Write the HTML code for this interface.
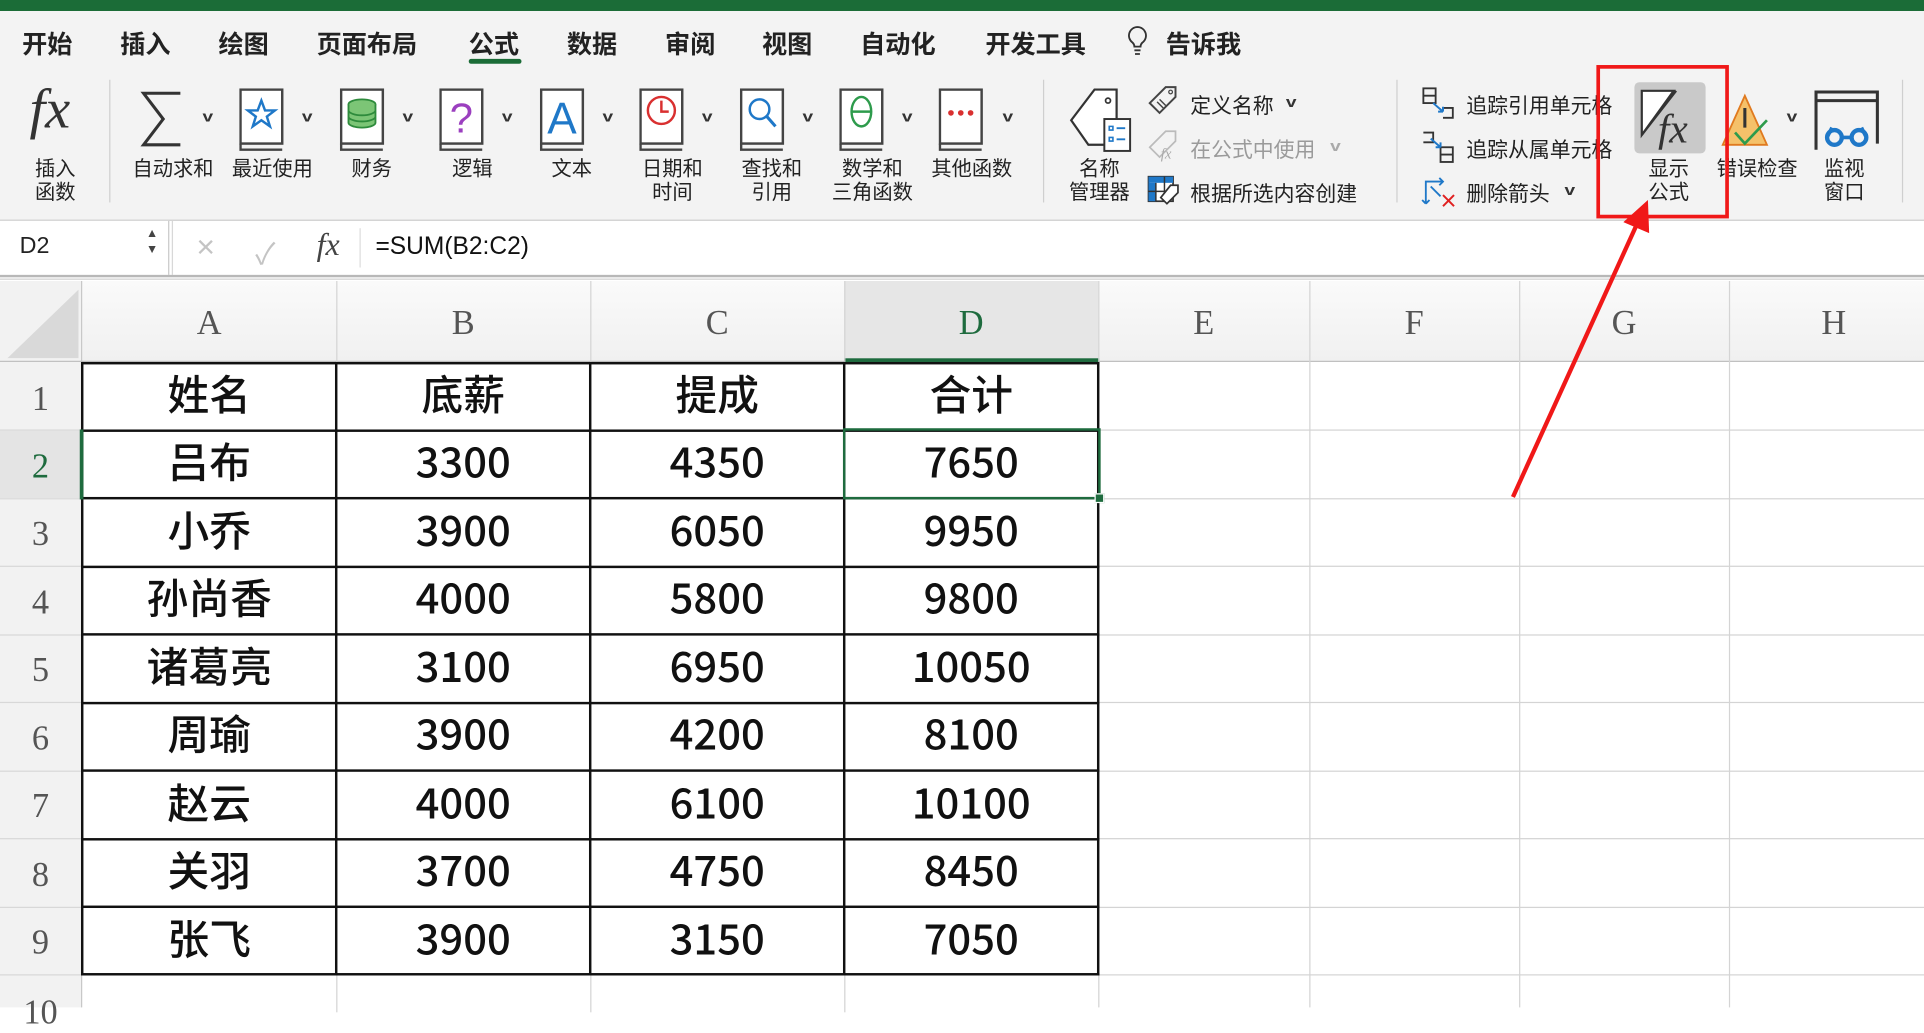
<!DOCTYPE html>
<html><head><meta charset="utf-8">
<style>
html,body{margin:0;padding:0;width:1924px;height:1008px;overflow:hidden;background:#fff}
#w{position:absolute;left:0;top:0;width:1568px;height:821.5px;transform:scale(1.22704);transform-origin:0 0;font-family:"Liberation Sans","Noto Sans CJK SC",sans-serif;color:#222}
.a{position:absolute}
.tab{position:absolute;top:19px;font-size:20.5px;font-weight:bold;color:#222;white-space:nowrap}
.lbl{position:absolute;font-size:16.5px;color:#222;text-align:center;line-height:19px;white-space:nowrap;transform:translateX(-50%)}
.sm{position:absolute;font-size:17px;color:#222;white-space:nowrap}
.chev{position:absolute;font-size:12px;font-weight:bold;color:#333;transform:scaleX(1.3)}
.sep{position:absolute;width:1px;background:#cfcfcf}
.ch{position:absolute;top:230px;height:65px;line-height:68px;text-align:center;font-family:"Liberation Serif",serif;font-size:28px;color:#555;transform-origin:center}
.rh{position:absolute;left:0;width:66px;text-align:center;font-family:"Liberation Serif",serif;font-size:28px;color:#555}
.c{position:absolute;text-align:center;font-size:34px;color:#111;line-height:50px;height:55px;font-family:"Noto Sans CJK SC","Liberation Sans",sans-serif;font-weight:500}
.hl{position:absolute;height:1px;background:#d4d4d4}
.vl{position:absolute;width:1px;background:#d4d4d4}
.bh{position:absolute;height:2px;background:#111;left:67px;width:829px}
.bv{position:absolute;width:2px;background:#111;top:295px;height:500px}
</style></head><body><div id="w">
<div class="a" style="left:0;top:0;width:1568px;height:9px;background:#1b6c37"></div>
<div class="a" style="left:0;top:9px;width:1568px;height:170px;background:#f3f3f3;border-bottom:1px solid #c9c9c9"></div>
<div class="tab" style="left:18px">开始</div>
<div class="tab" style="left:98px">插入</div>
<div class="tab" style="left:178px">绘图</div>
<div class="tab" style="left:258px">页面布局</div>
<div class="tab" style="left:382px">公式</div>
<div class="a" style="left:382px;top:48px;width:43px;height:4px;border-radius:2px;background:#1b6c37"></div>
<div class="tab" style="left:462px">数据</div>
<div class="tab" style="left:542px">审阅</div>
<div class="tab" style="left:621px">视图</div>
<div class="tab" style="left:701px">自动化</div>
<div class="tab" style="left:803px">开发工具</div>
<svg class="a" style="left:917px;top:20px" width="20" height="28" viewBox="0 0 20 28"><path d="M10 2a7 7 0 0 0-4 12.7c1 1 1.5 2 1.5 3.3h5c0-1.3.5-2.3 1.5-3.3A7 7 0 0 0 10 2z" fill="none" stroke="#333" stroke-width="1.5"/><path d="M7.5 21h5M8 24h4" stroke="#333" stroke-width="1.5"/></svg>
<div class="tab" style="left:950px">告诉我</div>

<div class="a" style="left:24px;top:62px;font-family:'Liberation Serif',serif;font-style:italic;font-size:46px;color:#333">fx</div>
<div class="lbl" style="left:45px;top:129px">插入<br>函数</div>
<div class="sep" style="left:89px;top:65px;height:100px"></div>

<svg class="a" style="left:113px;top:72px" width="40" height="50" viewBox="0 0 40 50"><path d="M34 4H4l16 21L4 46h30" fill="none" stroke="#333" stroke-width="2.5"/></svg>
<div class="chev" style="left:166px;top:88px">v</div>
<div class="lbl" style="left:141px;top:129px">自动求和</div>

<svg class="a" style="left:195px;top:72px" width="38" height="52" viewBox="0 0 38 52"><rect x="1" y="1" width="34" height="44" fill="#fff" stroke="#444" stroke-width="2"/><path d="M1 45v5h34" fill="none" stroke="#444" stroke-width="2"/><path d="M18 10l3 8h8l-6.5 5 2.5 8-7-5-7 5 2.5-8L7 18h8z" fill="none" stroke="#1f78c8" stroke-width="2"/></svg>
<div class="chev" style="left:247px;top:88px">v</div>
<div class="lbl" style="left:222px;top:129px">最近使用</div>

<svg class="a" style="left:277px;top:72px" width="38" height="52" viewBox="0 0 38 52"><rect x="1" y="1" width="34" height="44" fill="#fff" stroke="#444" stroke-width="2"/><path d="M1 45v5h34" fill="none" stroke="#444" stroke-width="2"/><ellipse cx="18" cy="13" rx="11" ry="4" fill="#7cc576" stroke="#2e8b3c" stroke-width="1.5"/><path d="M7 13v15c0 2 5 4 11 4s11-2 11-4V13M7 18c0 2 5 4 11 4s11-2 11-4M7 23c0 2 5 4 11 4s11-2 11-4" fill="#7cc576" stroke="#2e8b3c" stroke-width="1.5"/></svg>
<div class="chev" style="left:329px;top:88px">v</div>
<div class="lbl" style="left:303px;top:129px">财务</div>

<svg class="a" style="left:358px;top:72px" width="38" height="52" viewBox="0 0 38 52"><rect x="1" y="1" width="34" height="44" fill="#fff" stroke="#444" stroke-width="2"/><path d="M1 45v5h34" fill="none" stroke="#444" stroke-width="2"/><text x="18" y="36" font-family="Liberation Sans" font-size="34" fill="#9b3fbf" text-anchor="middle">?</text></svg>
<div class="chev" style="left:410px;top:88px">v</div>
<div class="lbl" style="left:385px;top:129px">逻辑</div>

<svg class="a" style="left:440px;top:72px" width="38" height="52" viewBox="0 0 38 52"><rect x="1" y="1" width="34" height="44" fill="#fff" stroke="#444" stroke-width="2"/><path d="M1 45v5h34" fill="none" stroke="#444" stroke-width="2"/><text x="18" y="37" font-family="Liberation Sans" font-size="36" fill="#1f78c8" text-anchor="middle">A</text></svg>
<div class="chev" style="left:492px;top:88px">v</div>
<div class="lbl" style="left:466px;top:129px">文本</div>

<svg class="a" style="left:521px;top:72px" width="38" height="52" viewBox="0 0 38 52"><rect x="1" y="1" width="34" height="44" fill="#fff" stroke="#444" stroke-width="2"/><path d="M1 45v5h34" fill="none" stroke="#444" stroke-width="2"/><circle cx="18" cy="18" r="11" fill="none" stroke="#d93030" stroke-width="2"/><path d="M18 10v9h6" fill="none" stroke="#d93030" stroke-width="2"/></svg>
<div class="chev" style="left:573px;top:88px">v</div>
<div class="lbl" style="left:548px;top:129px">日期和<br>时间</div>

<svg class="a" style="left:603px;top:72px" width="38" height="52" viewBox="0 0 38 52"><rect x="1" y="1" width="34" height="44" fill="#fff" stroke="#444" stroke-width="2"/><path d="M1 45v5h34" fill="none" stroke="#444" stroke-width="2"/><circle cx="16" cy="17" r="8" fill="none" stroke="#1f78c8" stroke-width="2"/><path d="M22 23l7 8" stroke="#1f78c8" stroke-width="2.5"/></svg>
<div class="chev" style="left:655px;top:88px">v</div>
<div class="lbl" style="left:629px;top:129px">查找和<br>引用</div>

<svg class="a" style="left:684px;top:72px" width="38" height="52" viewBox="0 0 38 52"><rect x="1" y="1" width="34" height="44" fill="#fff" stroke="#444" stroke-width="2"/><path d="M1 45v5h34" fill="none" stroke="#444" stroke-width="2"/><ellipse cx="18" cy="19" rx="8" ry="12" fill="none" stroke="#2e9b4c" stroke-width="2"/><path d="M10 19h16" stroke="#2e9b4c" stroke-width="2"/></svg>
<div class="chev" style="left:736px;top:88px">v</div>
<div class="lbl" style="left:711px;top:129px">数学和<br>三角函数</div>

<svg class="a" style="left:765px;top:72px" width="38" height="52" viewBox="0 0 38 52"><rect x="1" y="1" width="34" height="44" fill="#fff" stroke="#444" stroke-width="2"/><path d="M1 45v5h34" fill="none" stroke="#444" stroke-width="2"/><circle cx="10" cy="20" r="2.3" fill="#d93030"/><circle cx="18" cy="20" r="2.3" fill="#d93030"/><circle cx="26" cy="20" r="2.3" fill="#d93030"/></svg>
<div class="chev" style="left:818px;top:88px">v</div>
<div class="lbl" style="left:792px;top:129px">其他函数</div>

<div class="sep" style="left:850px;top:65px;height:100px"></div>

<svg class="a" style="left:870px;top:70px" width="56" height="56" viewBox="0 0 56 56"><path d="M40 3H22L3 28l14 20h23z" fill="#fff" stroke="#333" stroke-width="1.8"/><circle cx="33" cy="12" r="2" fill="none" stroke="#333" stroke-width="1.4"/><rect x="30" y="27" width="21" height="26" fill="#fff" stroke="#333" stroke-width="1.6"/><path d="M34 33h3v3h-3zM34 42h3v3h-3z" fill="none" stroke="#1f78c8" stroke-width="1.3"/><path d="M40 34.5h7M40 43.5h7" stroke="#1f78c8" stroke-width="1.5"/></svg>
<div class="lbl" style="left:896px;top:129px">名称<br>管理器</div>

<svg class="a" style="left:934px;top:68px" width="28" height="28" viewBox="0 0 28 28"><path d="M16 3h8v8L11 24 3 16z" fill="none" stroke="#444" stroke-width="1.6"/><circle cx="20" cy="7" r="1.5" fill="none" stroke="#444"/><path d="M9 15l5 5M11 13l5 5" stroke="#444" stroke-width="1.2"/></svg>
<div class="sm" style="left:970px;top:72px">定义名称</div><div class="chev" style="left:1049px;top:76px">v</div>
<svg class="a" style="left:934px;top:104px" width="28" height="28" viewBox="0 0 28 28"><path d="M16 3h8v8L11 24 3 16z" fill="none" stroke="#bbb" stroke-width="1.4"/><text x="12" y="25" font-family="Liberation Serif" font-style="italic" font-size="12" fill="#aaa">fx</text></svg>
<div class="sm" style="left:970px;top:108px;color:#9a9a9a">在公式中使用</div><div class="chev" style="left:1085px;top:112px;color:#aaa">v</div>
<svg class="a" style="left:934px;top:141px" width="30" height="28" viewBox="0 0 30 28"><rect x="2" y="3" width="20" height="20" fill="#fff" stroke="#333" stroke-width="1.4"/><rect x="2" y="3" width="20" height="5" fill="#1f78c8"/><rect x="2" y="8" width="6" height="15" fill="#1f78c8"/><path d="M8 8v15M15 3v20M2 15h20" stroke="#333" stroke-width="1.2"/><path d="M20 10h6v6l-9 9-5-5z" fill="#fff" stroke="#333" stroke-width="1.4"/></svg>
<div class="sm" style="left:970px;top:144px">根据所选内容创建</div>

<div class="sep" style="left:1138px;top:65px;height:100px"></div>

<svg class="a" style="left:1158px;top:70px" width="28" height="28" viewBox="0 0 28 28"><rect x="2" y="2" width="10" height="12" fill="none" stroke="#333" stroke-width="1.5"/><path d="M2 8h10" stroke="#333" stroke-width="1.5"/><path d="M18 18h8v8h-8" fill="none" stroke="#333" stroke-width="1.5"/><path d="M10 14l8 7m0 0h-4m4 0v-4" fill="none" stroke="#1f78c8" stroke-width="1.6"/></svg>
<div class="sm" style="left:1195px;top:72px">追踪引用单元格</div>
<svg class="a" style="left:1158px;top:106px" width="28" height="28" viewBox="0 0 28 28"><path d="M2 2h8v8H2" fill="none" stroke="#333" stroke-width="1.5"/><rect x="16" y="14" width="10" height="12" fill="none" stroke="#333" stroke-width="1.5"/><path d="M16 20h10" stroke="#333" stroke-width="1.5"/><path d="M8 7l8 7m0 0h-4m4 0v-4" fill="none" stroke="#1f78c8" stroke-width="1.6"/></svg>
<div class="sm" style="left:1195px;top:108px">追踪从属单元格</div>
<svg class="a" style="left:1158px;top:142px" width="30" height="28" viewBox="0 0 30 28"><path d="M4 24V6h14m-3-3 3 3-3 3M4 24l-3-3m3 3 3-3M8 10l8 8" fill="none" stroke="#1f78c8" stroke-width="1.5"/><path d="M18 17l9 9m0-9-9 9" stroke="#e02020" stroke-width="1.6"/></svg>
<div class="sm" style="left:1195px;top:144px">删除箭头</div><div class="chev" style="left:1276px;top:148px">v</div>

<div class="a" style="left:1332px;top:67px;width:58px;height:58px;border-radius:4px;background:#c9c9c9"></div>
<svg class="a" style="left:1335px;top:70px" width="52" height="52" viewBox="0 0 52 52"><path d="M3 4h26L3 40z" fill="#fff" stroke="#333" stroke-width="1.8"/><path d="M3 40L31 4" stroke="#333" stroke-width="1.8"/><text x="16" y="46" font-family="Liberation Serif" font-style="italic" font-size="34" fill="#333">fx</text></svg>
<div class="lbl" style="left:1360px;top:129px">显示<br>公式</div>

<svg class="a" style="left:1402px;top:74px" width="48" height="48" viewBox="0 0 48 48"><path d="M20 4L2 44h36z" fill="#f5c16a" stroke="#e07a1f" stroke-width="1.5"/><path d="M20 14v16" stroke="#333" stroke-width="2.5"/><path d="M12 34l8 9 18-19" fill="none" stroke="#2e9b4c" stroke-width="2.2"/></svg>
<div class="chev" style="left:1457px;top:88px">v</div>
<div class="lbl" style="left:1432px;top:129px">错误检查</div>

<svg class="a" style="left:1477px;top:72px" width="56" height="52" viewBox="0 0 56 52"><path d="M3 50V3h50v42" fill="none" stroke="#333" stroke-width="2.5"/><path d="M3 10h50" stroke="#333" stroke-width="2.5"/><circle cx="18" cy="40" r="6" fill="none" stroke="#1f78c8" stroke-width="3.5"/><circle cx="38" cy="40" r="6" fill="none" stroke="#1f78c8" stroke-width="3.5"/><path d="M24 40h8M12 40l4-8M44 40l-4-8" stroke="#1f78c8" stroke-width="3"/></svg>
<div class="lbl" style="left:1503px;top:129px">监视<br>窗口</div>
<div class="sep" style="left:1550px;top:65px;height:100px"></div>

<div class="a" style="left:1301px;top:53px;width:102px;height:119px;border:3px solid #f01818"></div>

<div class="a" style="left:0;top:180px;width:1568px;height:45px;background:#fff"></div>
<div class="a" style="left:0;top:180px;width:137px;height:44px;border-right:1px solid #c9c9c9;background:#fff"></div>
<div class="a" style="left:16px;top:190px;font-size:19px;color:#222">D2</div>
<div class="a" style="left:119px;top:184px;font-size:10px;color:#444;line-height:13px">▲<br>▼</div>
<div class="a" style="left:140px;top:180px;width:1px;height:44px;background:#d8d8d8"></div>
<div class="a" style="left:160px;top:186px;font-size:26px;color:#c4c4c4">×</div>
<div class="a" style="left:208px;top:187px;font-size:24px;color:#c4c4c4">✓</div>
<div class="a" style="left:258px;top:185px;font-family:'Liberation Serif',serif;font-style:italic;font-size:26px;color:#444">fx</div>
<div class="a" style="left:293px;top:186px;width:1px;height:32px;background:#ddd"></div>
<div class="a" style="left:306px;top:190px;font-size:20px;color:#111">=SUM(B2:C2)</div>
<div class="a" style="left:0;top:224px;width:1568px;height:2px;background:#b8b8b8"></div>
<div class="a" style="left:0;top:227px;width:1568px;height:1px;background:#d0d0d0"></div>

<div class="a" style="left:0;top:229px;width:1568px;height:66px;background:linear-gradient(#fafafa,#f0f0f0)"></div>
<div class="a" style="left:0;top:229px;width:66px;height:592px;background:#f2f2f2;border-right:1px solid #c8c8c8"></div>
<svg class="a" style="left:6px;top:236px" width="58" height="56"><path d="M58 0V56H0z" fill="#d9d9d9"/></svg>
<div class="a" style="left:688px;top:229px;width:207px;height:66px;background:#e6e6e6"></div>
<div class="a" style="left:0;top:294px;width:1568px;height:1px;background:#c0c0c0"></div>
<div class="a" style="left:688px;top:292px;width:208px;height:3px;background:#1e6b3e"></div>
<div class="vl" style="left:274px;top:229px;height:66px"></div>
<div class="vl" style="left:481px;top:229px;height:66px"></div>
<div class="vl" style="left:688px;top:229px;height:66px"></div>
<div class="vl" style="left:895px;top:229px;height:592px"></div>
<div class="vl" style="left:1067px;top:229px;height:592px"></div>
<div class="vl" style="left:1238px;top:229px;height:592px"></div>
<div class="vl" style="left:1409px;top:229px;height:592px"></div>
<div class="vl" style="left:274px;top:795px;height:30px"></div>
<div class="vl" style="left:481px;top:795px;height:30px"></div>
<div class="vl" style="left:688px;top:795px;height:30px"></div>
<div class="ch" style="left:67px;width:207px">A</div>
<div class="ch" style="left:274px;width:207px">B</div>
<div class="ch" style="left:481px;width:207px">C</div>
<div class="ch" style="left:688px;width:207px;color:#1e6b3e">D</div>
<div class="ch" style="left:895px;width:172px">E</div>
<div class="ch" style="left:1067px;width:171px">F</div>
<div class="ch" style="left:1238px;width:171px">G</div>
<div class="ch" style="left:1409px;width:171px">H</div>

<div class="hl" style="left:895px;top:350px;width:673px"></div>
<div class="hl" style="left:895px;top:406px;width:673px"></div>
<div class="hl" style="left:895px;top:461px;width:673px"></div>
<div class="hl" style="left:895px;top:517px;width:673px"></div>
<div class="hl" style="left:895px;top:572px;width:673px"></div>
<div class="hl" style="left:895px;top:628px;width:673px"></div>
<div class="hl" style="left:895px;top:683px;width:673px"></div>
<div class="hl" style="left:895px;top:739px;width:673px"></div>
<div class="hl" style="left:895px;top:794px;width:673px"></div>
<div class="hl" style="left:0;top:350px;width:66px;background:#d8d8d8"></div>
<div class="hl" style="left:0;top:406px;width:66px;background:#d8d8d8"></div>
<div class="hl" style="left:0;top:461px;width:66px;background:#d8d8d8"></div>
<div class="hl" style="left:0;top:517px;width:66px;background:#d8d8d8"></div>
<div class="hl" style="left:0;top:572px;width:66px;background:#d8d8d8"></div>
<div class="hl" style="left:0;top:628px;width:66px;background:#d8d8d8"></div>
<div class="hl" style="left:0;top:683px;width:66px;background:#d8d8d8"></div>
<div class="hl" style="left:0;top:739px;width:66px;background:#d8d8d8"></div>
<div class="hl" style="left:0;top:794px;width:66px;background:#d8d8d8"></div>
<div class="a" style="left:0;top:351px;width:66px;height:55px;background:#e4e4e4"></div>

<div class="rh" style="top:310px">1</div>
<div class="rh" style="top:365px;color:#1e6b3e">2</div>
<div class="rh" style="top:420px">3</div>
<div class="rh" style="top:476px">4</div>
<div class="rh" style="top:531px">5</div>
<div class="rh" style="top:587px">6</div>
<div class="rh" style="top:642px">7</div>
<div class="rh" style="top:698px">8</div>
<div class="rh" style="top:753px">9</div>
<div class="rh" style="top:810px">10</div>

<div class="bh" style="top:295px"></div>
<div class="bh" style="top:350px"></div>
<div class="bh" style="top:405px"></div>
<div class="bh" style="top:461px"></div>
<div class="bh" style="top:516px"></div>
<div class="bh" style="top:572px"></div>
<div class="bh" style="top:627px"></div>
<div class="bh" style="top:683px"></div>
<div class="bh" style="top:738px"></div>
<div class="bh" style="top:793px"></div>
<div class="bv" style="left:66px"></div>
<div class="bv" style="left:273px"></div>
<div class="bv" style="left:480px"></div>
<div class="bv" style="left:687px"></div>
<div class="bv" style="left:894px"></div>

<div class="c" style="left:67px;width:207px;top:295px">姓名</div>
<div class="c" style="left:274px;width:207px;top:295px">底薪</div>
<div class="c" style="left:481px;width:207px;top:295px">提成</div>
<div class="c" style="left:688px;width:207px;top:295px">合计</div>

<div class="c" style="left:67px;width:207px;top:350px">吕布</div>
<div class="c" style="left:274px;width:207px;top:350px">3300</div>
<div class="c" style="left:481px;width:207px;top:350px">4350</div>
<div class="c" style="left:688px;width:207px;top:350px">7650</div>

<div class="c" style="left:67px;width:207px;top:406px">小乔</div>
<div class="c" style="left:274px;width:207px;top:406px">3900</div>
<div class="c" style="left:481px;width:207px;top:406px">6050</div>
<div class="c" style="left:688px;width:207px;top:406px">9950</div>

<div class="c" style="left:67px;width:207px;top:461px">孙尚香</div>
<div class="c" style="left:274px;width:207px;top:461px">4000</div>
<div class="c" style="left:481px;width:207px;top:461px">5800</div>
<div class="c" style="left:688px;width:207px;top:461px">9800</div>

<div class="c" style="left:67px;width:207px;top:517px">诸葛亮</div>
<div class="c" style="left:274px;width:207px;top:517px">3100</div>
<div class="c" style="left:481px;width:207px;top:517px">6950</div>
<div class="c" style="left:688px;width:207px;top:517px">10050</div>

<div class="c" style="left:67px;width:207px;top:572px">周瑜</div>
<div class="c" style="left:274px;width:207px;top:572px">3900</div>
<div class="c" style="left:481px;width:207px;top:572px">4200</div>
<div class="c" style="left:688px;width:207px;top:572px">8100</div>

<div class="c" style="left:67px;width:207px;top:628px">赵云</div>
<div class="c" style="left:274px;width:207px;top:628px">4000</div>
<div class="c" style="left:481px;width:207px;top:628px">6100</div>
<div class="c" style="left:688px;width:207px;top:628px">10100</div>

<div class="c" style="left:67px;width:207px;top:683px">关羽</div>
<div class="c" style="left:274px;width:207px;top:683px">3700</div>
<div class="c" style="left:481px;width:207px;top:683px">4750</div>
<div class="c" style="left:688px;width:207px;top:683px">8450</div>

<div class="c" style="left:67px;width:207px;top:739px">张飞</div>
<div class="c" style="left:274px;width:207px;top:739px">3900</div>
<div class="c" style="left:481px;width:207px;top:739px">3150</div>
<div class="c" style="left:688px;width:207px;top:739px">7050</div>

<div class="a" style="left:65px;top:350px;width:3px;height:57px;background:#1e6b3e"></div>
<div class="a" style="left:687px;top:349px;width:206px;height:54px;border:2px solid #1e6b3e"></div>
<div class="a" style="left:892px;top:402px;width:6px;height:6px;background:#1e6b3e;border:1px solid #fff"></div>

<svg class="a" style="left:0;top:0" width="1568" height="821"><line x1="1233" y1="405" x2="1333" y2="185" stroke="#f01818" stroke-width="3.5"/><path d="M1343 163L1344 190 1323 181z" fill="#f01818"/></svg>
</div></body></html>
